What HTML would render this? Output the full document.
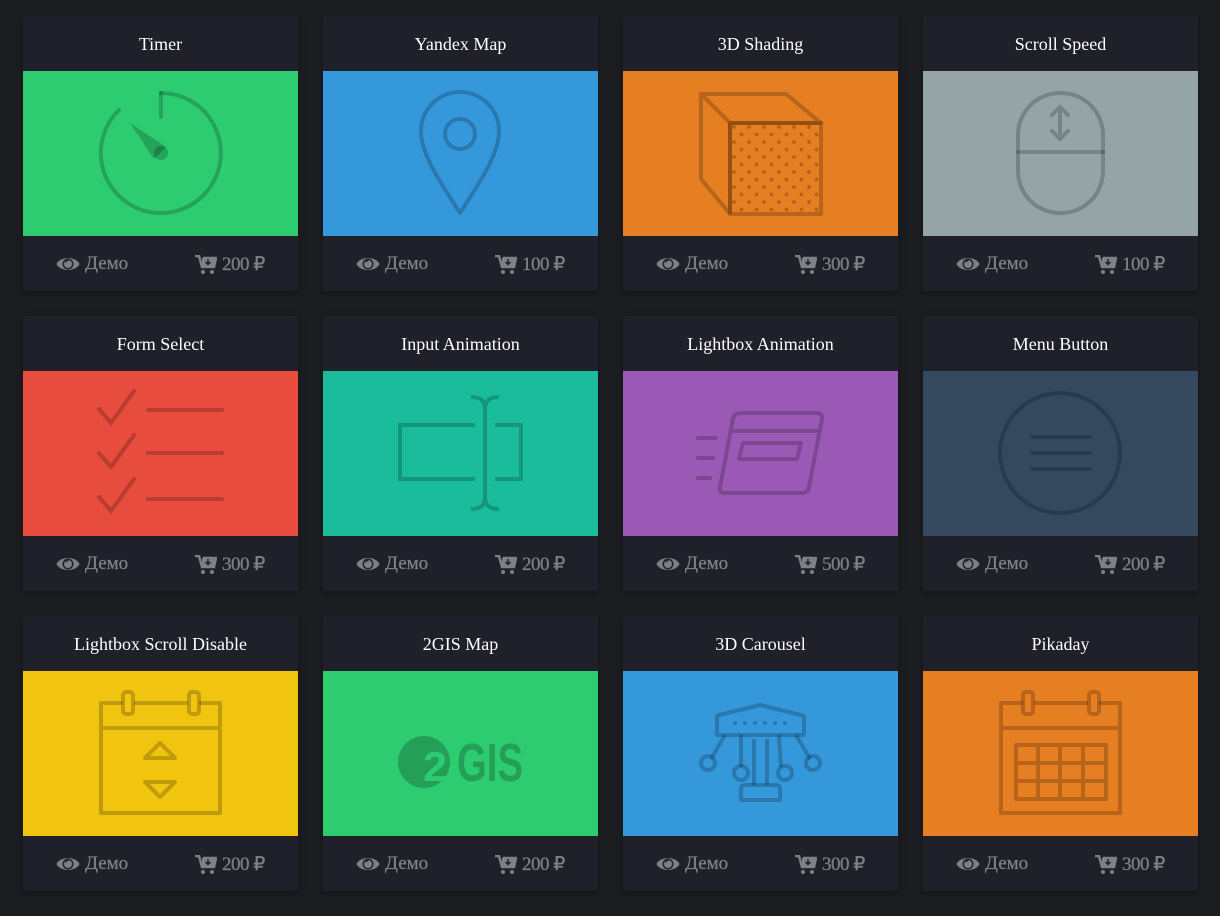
<!DOCTYPE html>
<html><head><meta charset="utf-8"><style>
*{margin:0;padding:0;box-sizing:border-box}
body{width:1220px;height:916px;background:#1c1d21;font-family:"Liberation Serif",serif;position:relative;overflow:hidden}
.card{position:absolute;width:275px;height:275px;background:#1f2029;box-shadow:0 2px 6px rgba(0,0,0,.35)}
.t{height:55px;line-height:56px;text-align:center;color:#fff;font-size:18px}
.img{height:165px;position:relative}
.img svg{position:absolute;left:0;top:0}
.f{height:55px;position:relative;color:#7f8084;font-size:19px;-webkit-text-stroke:0.3px #7f8084}
.f .d{position:absolute;left:33px;top:17px;display:flex;align-items:center;gap:5px}
.f .p{position:absolute;left:172px;top:17px;display:flex;align-items:center;gap:5px;letter-spacing:-0.5px}
</style></head><body>
<svg width="0" height="0" style="position:absolute"><defs>
<symbol id="eye" viewBox="0 0 24 16"><path d="M0.5 8C4 0 20 0 23.5 8C20 16 4 16 0.5 8Z" fill="#7f8084"/><circle cx="12" cy="8" r="5.5" fill="#1f2029"/><circle cx="12" cy="8" r="4" fill="#7f8084"/><path d="M9.5 6.5a3 3 0 0 1 3-2" stroke="#1f2029" stroke-width="1.2" fill="none"/></symbol>
<symbol id="cart" viewBox="0 0 22 20"><path d="M0 1h4l3 11h12l2-9H8" fill="none" stroke="#7f8084" stroke-width="2.5"/><rect x="7" y="3" width="13" height="8" fill="#7f8084"/><path d="M13 4v5M10.5 7l2.5 2.5 2.5-2.5" stroke="#1f2029" stroke-width="1.5" fill="none"/><circle cx="8" cy="17" r="2" fill="#7f8084"/><circle cx="17" cy="17" r="2" fill="#7f8084"/></symbol>
<pattern id="dots" width="15" height="15" patternUnits="userSpaceOnUse" x="107" y="52"><circle cx="4" cy="4" r="1.9" fill="rgba(0,0,0,.22)"/><circle cx="11.5" cy="11.5" r="1.9" fill="rgba(0,0,0,.22)"/></pattern>
</defs></svg>

<!-- Row 1 -->
<div class="card" style="left:23px;top:16px"><div class="t">Timer</div><div class="img" style="background:#2ecc71"><svg width="275" height="165" fill="none" stroke="rgba(0,0,0,.2)" stroke-width="4" stroke-linecap="round"><path d="M138 22A60 60 0 1 1 96 39"/><path d="M138 22V46"/><path d="M107 52L143 76L131 88Z" fill="rgba(0,0,0,.2)" stroke="none"/><circle cx="138" cy="82" r="7" fill="rgba(0,0,0,.2)" stroke="none"/></svg></div><div class="f"><span class="d"><svg width="24" height="16"><use href="#eye"/></svg>Демо</span><span class="p"><svg width="22" height="20"><use href="#cart"/></svg>200 ₽</span></div></div>

<div class="card" style="left:323px;top:16px"><div class="t">Yandex Map</div><div class="img" style="background:#3498db"><svg width="275" height="165" fill="none" stroke="rgba(0,0,0,.2)" stroke-width="4" stroke-linejoin="round"><path d="M137 142C120 115 98 85 98 60A39 39 0 0 1 176 60C176 85 154 115 137 142Z"/><circle cx="137" cy="63" r="15"/></svg></div><div class="f"><span class="d"><svg width="24" height="16"><use href="#eye"/></svg>Демо</span><span class="p"><svg width="22" height="20"><use href="#cart"/></svg>100 ₽</span></div></div>

<div class="card" style="left:623px;top:16px"><div class="t">3D Shading</div><div class="img" style="background:#e67e22"><svg width="275" height="165" fill="none" stroke="rgba(0,0,0,.2)" stroke-width="4" stroke-linejoin="round"><rect x="107" y="52" width="91" height="91" fill="url(#dots)"/><path d="M78 23H163L198 52H107Z M78 23V108L107 143 M107 52V143"/></svg></div><div class="f"><span class="d"><svg width="24" height="16"><use href="#eye"/></svg>Демо</span><span class="p"><svg width="22" height="20"><use href="#cart"/></svg>300 ₽</span></div></div>

<div class="card" style="left:923px;top:16px"><div class="t">Scroll Speed</div><div class="img" style="background:#95a5a6"><svg width="275" height="165" fill="none" stroke="rgba(0,0,0,.2)" stroke-width="4" stroke-linecap="round"><rect x="95" y="22" width="85" height="120" rx="42"/><path d="M95 81H180 M137 36V68 M129 44L137 36L145 44 M129 60L137 68L145 60"/></svg></div><div class="f"><span class="d"><svg width="24" height="16"><use href="#eye"/></svg>Демо</span><span class="p"><svg width="22" height="20"><use href="#cart"/></svg>100 ₽</span></div></div>

<!-- Row 2 -->
<div class="card" style="left:23px;top:316px"><div class="t">Form Select</div><div class="img" style="background:#e74c3c"><svg width="275" height="165" fill="none" stroke="rgba(0,0,0,.2)" stroke-width="4" stroke-linecap="round"><path d="M76 38L88 52L111 20 M76 82L88 96L111 64 M76 126L88 140L111 108 M125 39H199 M125 82H199 M125 128H199"/></svg></div><div class="f"><span class="d"><svg width="24" height="16"><use href="#eye"/></svg>Демо</span><span class="p"><svg width="22" height="20"><use href="#cart"/></svg>300 ₽</span></div></div>

<div class="card" style="left:323px;top:316px"><div class="t">Input Animation</div><div class="img" style="background:#1abc9c"><svg width="275" height="165" fill="none" stroke="rgba(0,0,0,.2)" stroke-width="4"><path d="M152 54H77V108H152 M172 54H198V108H172 M162 30V134 M148 26C158 26 162 30 162 38C162 30 166 26 176 26 M148 138C158 138 162 134 162 126C162 134 166 138 176 138"/></svg></div><div class="f"><span class="d"><svg width="24" height="16"><use href="#eye"/></svg>Демо</span><span class="p"><svg width="22" height="20"><use href="#cart"/></svg>200 ₽</span></div></div>

<div class="card" style="left:623px;top:316px"><div class="t">Lightbox Animation</div><div class="img" style="background:#9b59b6"><svg width="275" height="165" fill="none" stroke="rgba(0,0,0,.2)" stroke-width="4" stroke-linejoin="round" stroke-linecap="round"><path d="M119 42H194Q200 42 199 48L186 116Q185 122 179 122H102Q96 122 97 116L110 48Q111 42 119 42Z M108 60H197 M120 72H178L174 88H116Z M75 67H93 M75 87H90 M75 107H87"/></svg></div><div class="f"><span class="d"><svg width="24" height="16"><use href="#eye"/></svg>Демо</span><span class="p"><svg width="22" height="20"><use href="#cart"/></svg>500 ₽</span></div></div>

<div class="card" style="left:923px;top:316px"><div class="t">Menu Button</div><div class="img" style="background:#34495e"><svg width="275" height="165" fill="none" stroke="rgba(0,0,0,.2)" stroke-width="4" stroke-linecap="round"><circle cx="137" cy="82" r="60"/><path d="M109 66H167 M109 82H167 M109 98H167"/></svg></div><div class="f"><span class="d"><svg width="24" height="16"><use href="#eye"/></svg>Демо</span><span class="p"><svg width="22" height="20"><use href="#cart"/></svg>200 ₽</span></div></div>

<!-- Row 3 -->
<div class="card" style="left:23px;top:616px"><div class="t">Lightbox Scroll Disable</div><div class="img" style="background:#f1c40f"><svg width="275" height="165" fill="none" stroke="rgba(0,0,0,.2)" stroke-width="4" stroke-linejoin="round"><path d="M100 32H78V142H197V32H176 M111 32H165 M78 57H197"/><rect x="100" y="21" width="10" height="22" rx="3"/><rect x="166" y="21" width="10" height="22" rx="3"/><path d="M137 72L122 87H152Z M137 126L122 111H152Z"/></svg></div><div class="f"><span class="d"><svg width="24" height="16"><use href="#eye"/></svg>Демо</span><span class="p"><svg width="22" height="20"><use href="#cart"/></svg>200 ₽</span></div></div>

<div class="card" style="left:323px;top:616px"><div class="t">2GIS Map</div><div class="img" style="background:#2ecc71"><svg width="275" height="165"><circle cx="101" cy="91" r="26" fill="rgba(0,0,0,.22)"/><text x="100" y="110" font-family="Liberation Sans Narrow, Liberation Sans, sans-serif" font-weight="bold" font-size="42" fill="#2ecc71" textLength="24" lengthAdjust="spacingAndGlyphs">2</text><text x="134" y="110" font-family="Liberation Sans Narrow, Liberation Sans, sans-serif" font-weight="bold" font-size="54" fill="rgba(0,0,0,.22)" textLength="66" lengthAdjust="spacingAndGlyphs">GIS</text></svg></div><div class="f"><span class="d"><svg width="24" height="16"><use href="#eye"/></svg>Демо</span><span class="p"><svg width="22" height="20"><use href="#cart"/></svg>200 ₽</span></div></div>

<div class="card" style="left:623px;top:616px"><div class="t">3D Carousel</div><div class="img" style="background:#3498db"><svg width="275" height="165" fill="none" stroke="rgba(0,0,0,.2)" stroke-width="4" stroke-linejoin="round"><path d="M94 45V64H181V45L178 44L137 34L96 44Z"/><path d="M131 68V114 M144 68V114 M102 64L88 88 M118 64L118 96 M156 64L158 96 M173 64L187 88"/><circle cx="85" cy="92" r="7"/><circle cx="118" cy="102" r="7"/><circle cx="162" cy="102" r="7"/><circle cx="190" cy="92" r="7"/><path d="M118 129V118Q118 114 122 114H153Q157 114 157 118V129Z"/><g fill="rgba(0,0,0,.2)" stroke="none"><circle cx="112" cy="52" r="2"/><circle cx="122" cy="52" r="2"/><circle cx="132" cy="52" r="2"/><circle cx="142" cy="52" r="2"/><circle cx="152" cy="52" r="2"/><circle cx="162" cy="52" r="2"/></g></svg></div><div class="f"><span class="d"><svg width="24" height="16"><use href="#eye"/></svg>Демо</span><span class="p"><svg width="22" height="20"><use href="#cart"/></svg>300 ₽</span></div></div>

<div class="card" style="left:923px;top:616px"><div class="t">Pikaday</div><div class="img" style="background:#e67e22"><svg width="275" height="165" fill="none" stroke="rgba(0,0,0,.2)" stroke-width="4" stroke-linejoin="round"><path d="M100 32H78V142H197V32H176 M111 32H165 M78 57H197"/><rect x="100" y="21" width="10" height="22" rx="3"/><rect x="166" y="21" width="10" height="22" rx="3"/><path d="M93 74H183V128H93Z M93 92H183 M93 110H183 M115 74V128 M137 74V128 M160 74V128"/></svg></div><div class="f"><span class="d"><svg width="24" height="16"><use href="#eye"/></svg>Демо</span><span class="p"><svg width="22" height="20"><use href="#cart"/></svg>300 ₽</span></div></div>
</body></html>
